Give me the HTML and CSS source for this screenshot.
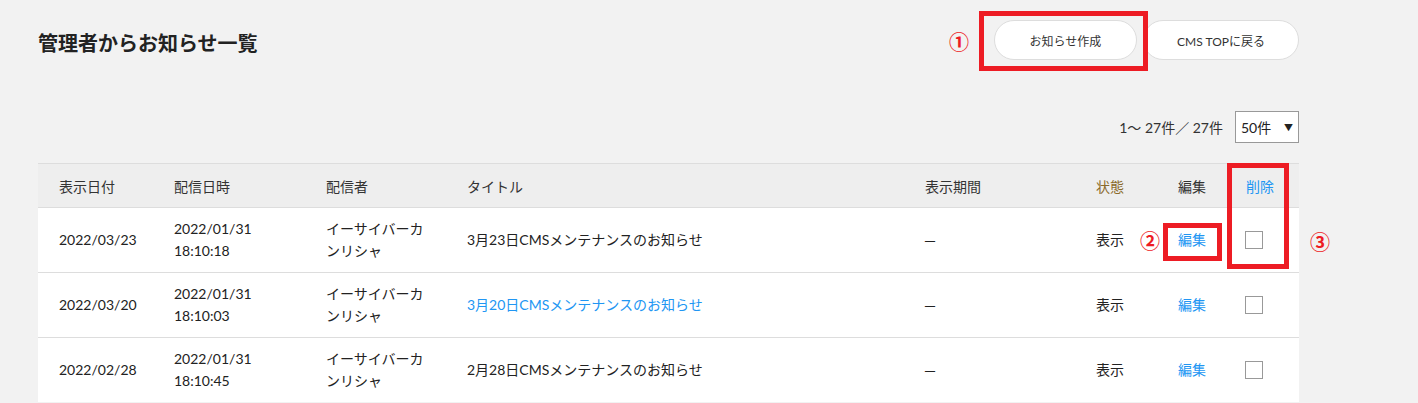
FILE: index.html
```html
<!DOCTYPE html>
<html lang="ja">
<head>
    <meta charset="UTF-8">
    <meta name="viewport" content="width=device-width, initial-scale=1.0">
    <title>管理者からお知らせ一覧</title>
    <link rel="stylesheet" href="styles.css">
</head>
<body>
    <div class="page">
        <div class="page-head">
            <h1>管理者からお知らせ一覧</h1>
            <div class="actions">
                <span class="mark">①</span>
                <span class="marked">
                    <button class="pill">お知らせ作成</button>
                </span>
                <button class="pill pill-wide">CMS TOPに戻る</button>
            </div>
        </div>

        <div class="pager">
            <span class="count">1〜 27件／ 27件</span>
            <div class="per-page">50件<span class="caret">▼</span></div>
        </div>

        <div class="board">
            <table class="list">
                <colgroup>
                    <col style="width:115px">
                    <col style="width:152px">
                    <col style="width:141px">
                    <col style="width:458px">
                    <col style="width:171px">
                    <col style="width:82px">
                    <col style="width:68px">
                    <col style="width:74px">
                </colgroup>
                <thead>
                    <tr>
                        <th>表示日付</th>
                        <th>配信日時</th>
                        <th>配信者</th>
                        <th>タイトル</th>
                        <th>表示期間</th>
                        <th class="state">状態</th>
                        <th>編集</th>
                        <th class="head-link">削除</th>
                    </tr>
                </thead>
                <tbody>
                    <tr>
                        <td>2022/03/23</td>
                        <td>2022/01/31<br>18:10:18</td>
                        <td>イーサイバーカ<br>ンリシャ</td>
                        <td>3月23日CMSメンテナンスのお知らせ</td>
                        <td class="dash">－</td>
                        <td>表示</td>
                        <td><a class="link">編集</a></td>
                        <td><span class="check"></span></td>
                    </tr>
                    <tr>
                        <td>2022/03/20</td>
                        <td>2022/01/31<br>18:10:03</td>
                        <td>イーサイバーカ<br>ンリシャ</td>
                        <td><a class="link">3月20日CMSメンテナンスのお知らせ</a></td>
                        <td class="dash">－</td>
                        <td>表示</td>
                        <td><a class="link">編集</a></td>
                        <td><span class="check"></span></td>
                    </tr>
                    <tr>
                        <td>2022/02/28</td>
                        <td>2022/01/31<br>18:10:45</td>
                        <td>イーサイバーカ<br>ンリシャ</td>
                        <td>2月28日CMSメンテナンスのお知らせ</td>
                        <td class="dash">－</td>
                        <td>表示</td>
                        <td><a class="link">編集</a></td>
                        <td><span class="check"></span></td>
                    </tr>
                </tbody>
            </table>

            <!-- annotations -->
            <span class="mark mark-2">②</span>
            <span class="hl hl-edit"></span>
            <span class="hl hl-delete"></span>
            <span class="mark mark-3">③</span>
        </div>
    </div>
</body>
</html>
```

FILE: styles.css
```css
body {
    margin: 0;
    background: #f2f2f2;
    color: #333;
    font-family: 'Lato', 'Noto Sans CJK JP', sans-serif;
    font-size: 14px;
}
.page {
    width: 1261px;
    padding: 20px 0 0 38px;
}
.page-head {
    display: flex;
    justify-content: space-between;
    align-items: center;
    height: 40px;
}
h1 {
    margin: 4px 0 0;
    font-size: 20px;
    font-weight: bold;
    color: #222;
}
.actions {
    display: flex;
    align-items: center;
}
.mark {
    color: #ed1c24;
    font-size: 20px;
    line-height: 20px;
    font-weight: bold;
    font-family: 'Noto Sans CJK JP', sans-serif;
}
.actions .mark {
    margin: 3px 25px 0 0;
}
.marked {
    position: relative;
    display: flex;
    margin-right: 6px;
}
.marked::after {
    content: '';
    position: absolute;
    top: -9px;
    left: -15px;
    right: -11px;
    bottom: -11px;
    border: 5px solid #ed1c24;
}
.pill {
    width: 143px;
    height: 40px;
    border: 1px solid #ddd;
    border-radius: 20px;
    background: #fff;
    color: #333;
    font-family: inherit;
    font-size: 12px;
    padding: 0;
}
.pill-wide {
    width: 156px;
}
.pager {
    display: flex;
    justify-content: flex-end;
    align-items: center;
    margin-top: 51px;
}
.count {
    margin-right: 12px;
    color: #333;
}
.per-page {
    display: flex;
    justify-content: space-between;
    align-items: center;
    width: 52px;
    height: 30px;
    padding: 0 5px;
    border: 1px solid #999;
    background: #fff;
    color: #222;
}
.caret {
    font-size: 9px;
}
.board {
    position: relative;
    margin-top: 20px;
}
.list {
    width: 1261px;
    table-layout: fixed;
    border-collapse: collapse;
    background: #fff;
}
.list th,
.list td {
    text-align: left;
    padding: 0 0 0 21px;
    border-top: 1px solid #ddd;
    vertical-align: middle;
}
.list th {
    height: 43px;
    background: #eee;
    font-weight: normal;
    color: #333;
}
.list td {
    height: 64px;
    line-height: 22px;
    color: #222;
}
.list .state {
    color: #8a6a2a;
}
.list .head-link {
    color: #2196f3;
}
.list .dash {
    font-family: 'Noto Sans CJK JP', sans-serif;
    padding-left: 19px;
}
.link {
    color: #2196f3;
    text-decoration: none;
}
.check {
    display: block;
    width: 16px;
    height: 16px;
    margin-left: -1px;
    border: 1px solid #999;
    background: #fff;
}
.hl {
    position: absolute;
    border: 5px solid #ed1c24;
}
.hl-edit {
    left: 1125px;
    top: 60px;
    width: 49px;
    height: 28px;
}
.hl-delete {
    left: 1189px;
    top: 0;
    width: 52px;
    height: 96px;
}
.mark-2 {
    position: absolute;
    left: 1102px;
    top: 68px;
}
.mark-3 {
    position: absolute;
    left: 1272px;
    top: 69px;
}
```
